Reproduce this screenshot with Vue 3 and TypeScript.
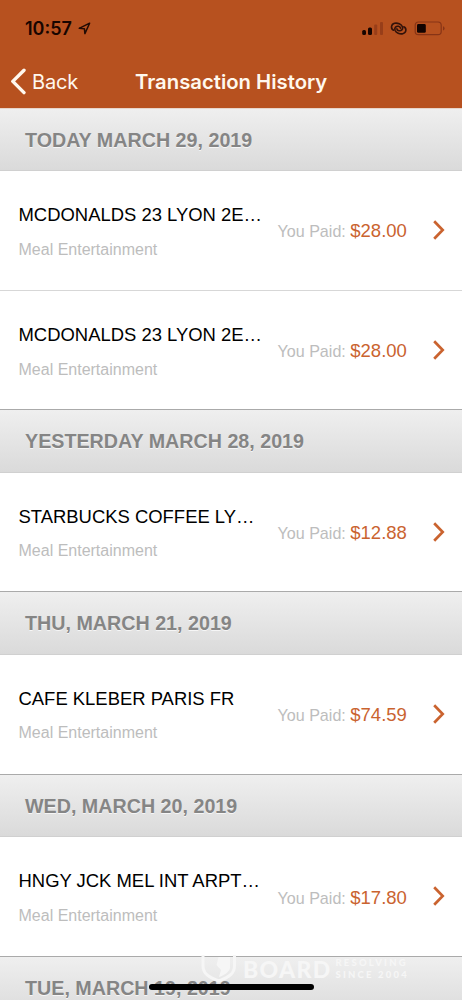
<script setup lang="ts">
interface Transaction {
  merchant: string
  amount: string
}

interface Group {
  label: string
  items: Transaction[]
}

const groups: Group[] = [
  {
    label: 'TODAY MARCH 29, 2019',
    items: [
      { merchant: 'MCDONALDS 23 LYON 2E…', amount: '$28.00' },
      { merchant: 'MCDONALDS 23 LYON 2E…', amount: '$28.00' },
    ],
  },
  { label: 'YESTERDAY MARCH 28, 2019', items: [{ merchant: 'STARBUCKS COFFEE LY…', amount: '$12.88' }] },
  { label: 'THU, MARCH 21, 2019', items: [{ merchant: 'CAFE KLEBER PARIS FR', amount: '$74.59' }] },
  { label: 'WED, MARCH 20, 2019', items: [{ merchant: 'HNGY JCK MEL INT ARPT…', amount: '$17.80' }] },
  { label: 'TUE, MARCH 19, 2019', items: [] },
]
</script>

<template>
  <div class="screen">
    <header class="top">
      <div class="status">
        <span class="clock">10:57</span>
        <svg class="location" width="13" height="13" viewBox="0 0 13 13">
          <path d="M1.2 6.3 11.6 1.2 6.9 11.6 6.4 6.7Z" fill="none" stroke="#210b04" stroke-width="1.5" stroke-linejoin="round" />
        </svg>
        <svg class="indicators" width="84" height="16" viewBox="0 0 84 16">
          <rect x="0.2" y="10" width="3.8" height="5" rx="1.5" fill="#170500" />
          <rect x="6" y="7.4" width="4" height="7.6" rx="1.5" fill="#170500" />
          <rect x="12.2" y="4.5" width="3" height="10.5" rx="1" fill="#983e19" />
          <rect x="18" y="2" width="3" height="13" rx="1" fill="#983e19" />
          <g fill="none" stroke="#32120a" stroke-width="1.6" stroke-linecap="round">
            <path d="M31.6 10.2C28.4 8.6 29 4.2 32.6 3.3C35.6 2.6 39.4 4.3 40.4 6.8C41.3 9.3 39.2 11.2 36.9 10.7C35.7 10.4 35 9.7 34.9 8.8" />
            <path d="M41.8 6.8C45 8.4 44.4 12.8 40.8 13.7C37.8 14.4 34 12.7 33 10.2C32.1 7.7 34.2 5.8 36.5 6.3C37.7 6.6 38.4 7.3 38.5 8.2" />
          </g>
          <rect x="53.2" y="2" width="26" height="12.6" rx="3.2" fill="none" stroke="#873416" stroke-width="1.2" />
          <rect x="55" y="4" width="8.8" height="8.8" rx="1.4" fill="#120300" />
          <path d="M81 6.2V10.6Q82.6 10 82.6 8.4T81 6.2Z" fill="#873416" />
        </svg>
      </div>
      <div class="nav">
        <svg class="back-arrow" width="18" height="28" viewBox="0 0 18 28">
          <path d="M15 3.2 3.8 14.4 15 25.6" fill="none" stroke="#fff8ee" stroke-width="3.4" stroke-linecap="round" stroke-linejoin="round" />
        </svg>
        <span class="back">Back</span>
        <h1>Transaction History</h1>
      </div>
    </header>
    <main>
      <section v-for="group in groups" :key="group.label">
        <h2>{{ group.label }}</h2>
        <article v-for="(item, i) in group.items" :key="i" class="row">
          <div class="details">
            <div class="merchant">{{ item.merchant }}</div>
            <div class="category">Meal Entertainment</div>
          </div>
          <div class="paid">You Paid: <span class="amount">{{ item.amount }}</span></div>
          <svg class="chevron" width="14" height="22" viewBox="0 0 14 22">
            <path d="M2.2 2.2 10.7 11 2.2 19.8" fill="none" stroke="#ca632f" stroke-width="2.7" />
          </svg>
        </article>
      </section>
    </main>
    <div class="watermark">
      <svg width="36" height="29" viewBox="0 0 36 29">
        <path d="M2 1V12C2 19 7 23 17.8 27C28.5 23 33.5 19 33.5 12V1" fill="none" stroke="#f6f6f6" stroke-width="3" />
        <path d="M17.5 3H29V14C28 18 24 21 18 23L20 16 15.5 11Z" fill="#f6f6f6" />
      </svg>
      <span class="board">BOARD</span>
      <span class="tag"><span>RESOLVING</span><span>SINCE 2004</span></span>
    </div>
    <div class="home"></div>
  </div>
</template>

<style>
body { margin: 0; }
</style>

<style scoped>
.screen {
  position: relative;
  width: 462px;
  height: 1000px;
  overflow: hidden;
  background: #fff;
  font-family: "Liberation Sans", Arial, sans-serif;
}
.top {
  box-sizing: border-box;
  height: 108px;
  background: #b7511f;
  font-family: Inter, sans-serif;
}
.status {
  display: flex;
  box-sizing: border-box;
  height: 54px;
  padding: 20px 16px 0 25px;
}
.clock {
  width: 51px;
  color: #170500;
  font-size: 18px;
  font-weight: 600;
  line-height: 18px;
}
.location { margin: 2px 0 0 2px; }
.indicators { margin-left: auto; }
.nav {
  display: flex;
  align-items: center;
  height: 54px;
  padding-left: 9px;
  color: #fff8ee;
}
.back {
  width: 50px;
  margin-left: 5px;
  padding-top: 1px;
  font-size: 20px;
  line-height: 26px;
  letter-spacing: -0.2px;
  white-space: nowrap;
}
h1 {
  margin: 0 0 0 53px;
  padding-top: 1px;
  font-size: 20.3px;
  font-weight: 600;
  line-height: 26px;
  white-space: nowrap;
}
h2 {
  box-sizing: border-box;
  height: 63.6px;
  margin: 0;
  padding-left: 25px;
  border-top: 1px solid #aaa;
  border-bottom: 1px solid #d0d0d0;
  background: linear-gradient(#efefef, #dadada);
  color: #858585;
  font-size: 19.7px;
  font-weight: 700;
  line-height: 62.6px;
  text-shadow: 0 1px 0 #f6f6f6;
  white-space: nowrap;
}
.row {
  display: flex;
  box-sizing: border-box;
  height: 118.7px;
  padding-left: 18.5px;
}
section:first-child h2 {
  height: 63px;
  border-top-color: #e7d5cb;
  line-height: 62px;
}
section:first-child .row { height: 119px; }
.row + .row { border-top: 1px solid #d7d7d7; }
.details {
  width: 259px;
  padding-top: 33px;
  white-space: nowrap;
}
.merchant {
  color: #000;
  font-size: 18.45px;
  line-height: 22px;
}
.category {
  margin-top: 13.5px;
  color: #bdbdbd;
  font-size: 16px;
  line-height: 20px;
}
.paid {
  width: 154.5px;
  padding-top: 48.4px;
  color: #bdbdbd;
  font-size: 16.1px;
  line-height: 23px;
  white-space: nowrap;
}
.amount { color: #ca632f; font-size: 18.5px; }
.chevron { margin-top: 48px; }
.watermark {
  display: flex;
  position: absolute;
  left: 201px;
  top: 954px;
  color: #f6f6f6;
  font-family: Lato, sans-serif;
  font-weight: 900;
}
.board {
  margin-left: 6px;
  font-size: 23px;
  line-height: 30px;
  letter-spacing: 1.3px;
}
.tag {
  display: flex;
  flex-direction: column;
  margin: 3px 0 0 4px;
  font-size: 9.5px;
  line-height: 12px;
  letter-spacing: 2.2px;
}
.home {
  position: absolute;
  left: 149px;
  top: 984px;
  width: 165px;
  height: 6px;
  border-radius: 3px;
  background: #000;
}
</style>
